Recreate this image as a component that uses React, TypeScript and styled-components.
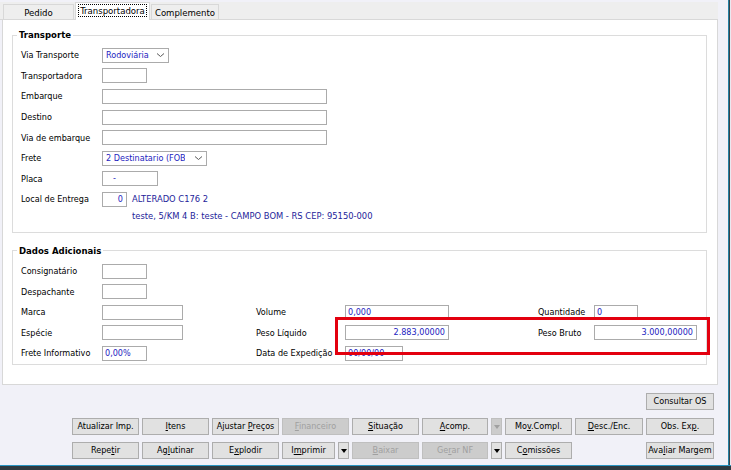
import React from 'react';
import styled, { createGlobalStyle } from 'styled-components';

const FONT = `"DejaVu Sans Condensed", "Liberation Sans", sans-serif`;

const Global = createGlobalStyle`
  html, body { margin: 0; padding: 0; }
  body {
    width: 731px; height: 470px; overflow: hidden;
    background: #F1F1F8;
    font-family: ${FONT};
    font-size: 9px;
    color: #000;
  }
  * { box-sizing: border-box; }
`;

const Screen = styled.div`
  position: relative;
  width: 731px;
  height: 470px;
  display: flex;
  flex-direction: column;
`;

const Window = styled.div`
  display: flex;
  height: 465px;
`;

const Client = styled.div`
  width: 728px;
  height: 465px;
  background: #F1F1F8;
  display: flex;
  flex-direction: column;
`;

const RightEdge = styled.div`
  width: 3px;
  background: linear-gradient(to right, #2380A3 0 1px, #39444A 1px 2px, #E9E9F1 2px);
`;

const BottomEdge = styled.div`
  height: 5px;
  background: linear-gradient(#2A95C2 0 1px, #2F3A40 1px);
`;

const TabControl = styled.div`
  width: 718px;
  height: 385px;
  display: flex;
  flex-direction: column;
`;

const TabStrip = styled.div`
  height: 20px;
  background: linear-gradient(#F1F1F8 0 2px, #EEEEEE 2px);
  border-bottom: 1px solid #D8D8D8;
  display: flex;
  align-items: flex-end;
  gap: 1px;
  padding-left: 3px;
`;

const Tab = styled.div<{ $w: number; $active?: boolean }>`
  position: relative;
  width: ${p => p.$w}px;
  height: ${p => (p.$active ? 18 : 15)}px;
  margin-bottom: ${p => (p.$active ? -1 : 0)}px;
  z-index: ${p => (p.$active ? 1 : 0)};
  background: ${p => (p.$active ? '#FFFFFF' : '#EEEEEE')};
  border: 1px solid #D8D8D8;
  border-bottom: none;
  display: flex;
  align-items: center;
  justify-content: center;
  font-size: 9.5px;
  padding-bottom: ${p => (p.$active ? 2 : 0)}px;
`;

const FocusText = styled.span`
  border: 1px dotted #000;
  padding: 0 1px;
  line-height: 11px;
`;

const Panel = styled.div`
  margin-left: 2px;
  width: 716px;
  flex: 1;
  background: #FFFFFF;
  border: 1px solid #D8D8D8;
  border-top: none;
  padding: 9px 10px 0 9px;
`;

const Group = styled.fieldset<{ $mt: number; $pb: number }>`
  margin: ${p => p.$mt}px 0 0 0;
  padding: 4px 8px ${p => p.$pb}px 8px;
  border: 1px solid #DCDCDC;
  min-width: 0;
`;

const Legend = styled.legend`
  padding: 0 2px;
  margin-left: -4px;
  font-weight: bold;
  font-size: 9.5px;
  line-height: 12px;
`;

const TransportGrid = styled.div`
  display: grid;
  grid-template-columns: 81px 1fr;
  grid-auto-rows: 20.6px;
  align-items: center;
`;

const DadosGrid = styled.div`
  display: grid;
  grid-template-columns: 81px 154px 89px 193px 56px 1fr;
  grid-auto-rows: 20.5px;
  align-items: center;
`;

const Label = styled.div<{ $col?: number }>`
  ${p => (p.$col ? `grid-column: ${p.$col};` : '')}
  white-space: nowrap;
  line-height: 12px;
`;

const Cell = styled.div<{ $col?: number }>`
  ${p => (p.$col ? `grid-column: ${p.$col};` : '')}
  display: flex;
  align-items: center;
  gap: 5px;
`;

const Field = styled.div<{ $w: number; $align?: 'left' | 'right'; $pl?: number }>`
  width: ${p => p.$w}px;
  height: 15px;
  border: 1px solid #ABABAB;
  background: #FFFFFF;
  color: #2323C0;
  padding: 0 3px 0 ${p => p.$pl ?? 2}px;
  line-height: 13px;
  text-align: ${p => p.$align ?? 'left'};
  white-space: nowrap;
  overflow: hidden;
`;

const Select = styled.div<{ $w: number }>`
  width: ${p => p.$w}px;
  height: 15px;
  border: 1px solid #ABABAB;
  background: #FFFFFF;
  color: #2323C0;
  display: flex;
  align-items: center;
  justify-content: space-between;
  padding: 0 3px 0 3px;
  white-space: nowrap;
`;

const SelectText = styled.span<{ $w: number }>`
  width: ${p => p.$w}px;
  overflow: hidden;
  line-height: 13px;
`;

const Chevron = styled.svg`
  flex: none;
`;

const InfoText = styled.span`
  color: #23239A;
  white-space: nowrap;
  line-height: 12px;
  font-size: 9.3px;
`;

const AddressLine = styled.div`
  padding-left: 111px;
  height: 12px;
  line-height: 12px;
  color: #23239A;
  white-space: nowrap;
  font-size: 9.3px;
`;

const ButtonArea = styled.div`
  padding: 8px 14px 0 72px;
  display: flex;
  flex-direction: column;
  gap: 7.5px;
`;

const ButtonRow = styled.div<{ $end?: boolean }>`
  display: flex;
  gap: 3px;
  justify-content: ${p => (p.$end ? 'flex-end' : 'flex-start')};
`;

const Button = styled.div<{ $w?: number; $disabled?: boolean; $push?: boolean }>`
  width: ${p => p.$w ?? 67}px;
  height: 17px;
  flex: none;
  ${p => (p.$push ? 'margin-left: auto;' : '')}
  border: 1px solid ${p => (p.$disabled ? '#BFBFBF' : '#ADADAD')};
  background: ${p => (p.$disabled ? '#CCCCCC' : '#E1E1E1')};
  color: ${p => (p.$disabled ? '#A0A0A0' : '#000')};
  display: flex;
  align-items: center;
  justify-content: center;
  font-size: 9px;
  white-space: nowrap;
  line-height: 11px;
`;

const Tri = styled.span<{ $disabled?: boolean }>`
  width: 0;
  height: 0;
  border-left: 3.5px solid transparent;
  border-right: 3.5px solid transparent;
  border-top: 4px solid ${p => (p.$disabled ? '#A0A0A0' : '#000')};
  margin-top: 1px;
`;

const U = styled.span`
  text-decoration: underline;
  text-underline-offset: 1px;
`;

const Highlight = styled.div`
  position: absolute;
  left: 335px;
  top: 317px;
  width: 375px;
  height: 38px;
  border: 3px solid #E3000F;
  pointer-events: none;
`;

const ChevronIcon = () => (
  <Chevron width="9" height="6" viewBox="0 0 9 6">
    <polyline points="1,1.5 4.5,4.5 8,1.5" fill="none" stroke="#5A5A5A" strokeWidth="1" />
  </Chevron>
);

const Arrow = ({ disabled }: { disabled?: boolean }) => (
  <Button $w={11} $disabled={disabled}>
    <Tri $disabled={disabled} />
  </Button>
);

export default function App() {
  return (
    <>
      <Global />
      <Screen>
        <Window>
          <Client>
            <TabControl>
              <TabStrip>
                <Tab $w={71}>Pedido</Tab>
                <Tab $w={75} $active>
                  <FocusText>Transportadora</FocusText>
                </Tab>
                <Tab $w={68}>Complemento</Tab>
              </TabStrip>
              <Panel>
                <Group $mt={0} $pb={10}>
                  <Legend>Transporte</Legend>
                  <TransportGrid>
                    <Label>Via Transporte</Label>
                    <Cell>
                      <Select $w={67}>
                        <SelectText $w={48}>Rodoviária</SelectText>
                        <ChevronIcon />
                      </Select>
                    </Cell>
                    <Label>Transportadora</Label>
                    <Cell><Field $w={45} /></Cell>
                    <Label>Embarque</Label>
                    <Cell><Field $w={225} /></Cell>
                    <Label>Destino</Label>
                    <Cell><Field $w={225} /></Cell>
                    <Label>Via de embarque</Label>
                    <Cell><Field $w={225} /></Cell>
                    <Label>Frete</Label>
                    <Cell>
                      <Select $w={105}>
                        <SelectText $w={79}>2 Destinatario (FOB)</SelectText>
                        <ChevronIcon />
                      </Select>
                    </Cell>
                    <Label>Placa</Label>
                    <Cell><Field $w={56} $pl={10}>-</Field></Cell>
                    <Label>Local de Entrega</Label>
                    <Cell>
                      <Field $w={25} $align="right">0</Field>
                      <InfoText>ALTERADO C176 2</InfoText>
                    </Cell>
                  </TransportGrid>
                  <AddressLine>teste, 5/KM 4 B: teste - CAMPO BOM - RS CEP: 95150-000</AddressLine>
                </Group>
                <Group $mt={12} $pb={1}>
                  <Legend>Dados Adicionais</Legend>
                  <DadosGrid>
                    <Label $col={1}>Consignatário</Label>
                    <Cell $col={2}><Field $w={45} /></Cell>

                    <Label $col={1}>Despachante</Label>
                    <Cell $col={2}><Field $w={45} /></Cell>

                    <Label $col={1}>Marca</Label>
                    <Cell $col={2}><Field $w={81} /></Cell>
                    <Label $col={3}>Volume</Label>
                    <Cell $col={4}><Field $w={104}>0,000</Field></Cell>
                    <Label $col={5}>Quantidade</Label>
                    <Cell $col={6}><Field $w={44}>0</Field></Cell>

                    <Label $col={1}>Espécie</Label>
                    <Cell $col={2}><Field $w={81} /></Cell>
                    <Label $col={3}>Peso Líquido</Label>
                    <Cell $col={4}><Field $w={104} $align="right">2.883,00000</Field></Cell>
                    <Label $col={5}>Peso Bruto</Label>
                    <Cell $col={6}><Field $w={103} $align="right">3.000,00000</Field></Cell>

                    <Label $col={1}>Frete Informativo</Label>
                    <Cell $col={2}><Field $w={45}>0,00%</Field></Cell>
                    <Label $col={3}>Data de Expedição</Label>
                    <Cell $col={4}><Field $w={58}>00/00/00</Field></Cell>
                  </DadosGrid>
                </Group>
              </Panel>
            </TabControl>
            <ButtonArea>
              <ButtonRow $end>
                <Button $w={68}>Consultar OS</Button>
              </ButtonRow>
              <ButtonRow>
                <Button>Atualizar Imp.</Button>
                <Button><span><U>I</U>tens</span></Button>
                <Button><span>Ajustar <U>P</U>reços</span></Button>
                <Button $disabled><span><U>F</U>inanceiro</span></Button>
                <Button><span><U>S</U>ituação</span></Button>
                <Button $w={66}><span><U>A</U>comp.</span></Button>
                <Arrow disabled />
                <Button><span>Mo<U>v</U>.Compl.</span></Button>
                <Button $w={68}><span><U>D</U>esc./Enc.</span></Button>
                <Button $w={68}><span>Obs. Ex<U>p</U>.</span></Button>
              </ButtonRow>
              <ButtonRow>
                <Button><span>Repe<U>t</U>ir</span></Button>
                <Button><span>Ag<U>l</U>utinar</span></Button>
                <Button><span>E<U>x</U>plodir</span></Button>
                <Button $w={53}><span>I<U>m</U>primir</span></Button>
                <Arrow />
                <Button $disabled><span><U>B</U>aixar</span></Button>
                <Button $w={66} $disabled><span>Ge<U>r</U>ar NF</span></Button>
                <Arrow />
                <Button><span>C<U>o</U>missões</span></Button>
                <Button $w={68} $push><span>Ava<U>l</U>iar Margem</span></Button>
              </ButtonRow>
            </ButtonArea>
          </Client>
          <RightEdge />
        </Window>
        <BottomEdge />
        <Highlight />
      </Screen>
    </>
  );
}
